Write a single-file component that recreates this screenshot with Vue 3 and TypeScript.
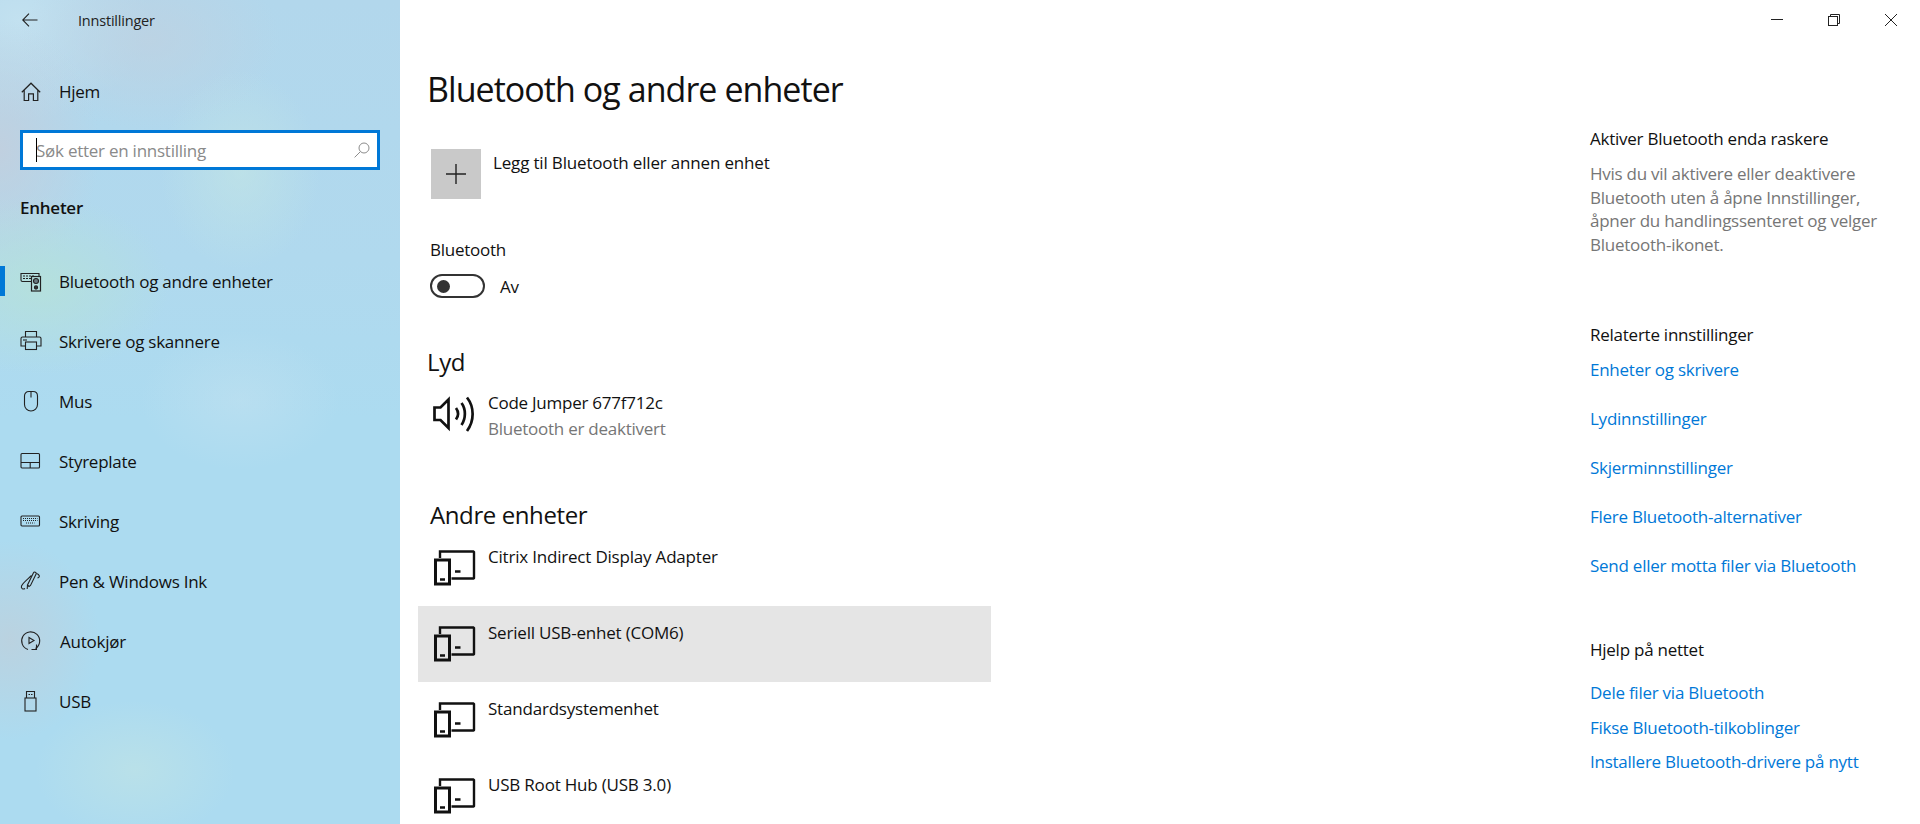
<script setup lang="ts">
const navItems: { label: string; icon: string; active?: boolean }[] = [
  { label: 'Bluetooth og andre enheter', icon: 'bt', active: true },
  { label: 'Skrivere og skannere', icon: 'printer' },
  { label: 'Mus', icon: 'mouse' },
  { label: 'Styreplate', icon: 'touchpad' },
  { label: 'Skriving', icon: 'keyboard' },
  { label: 'Pen & Windows Ink', icon: 'pen' },
  { label: 'Autokjør', icon: 'autoplay' },
  { label: 'USB', icon: 'usb' },
]
const devices = [
  { name: 'Citrix Indirect Display Adapter' },
  { name: 'Seriell USB-enhet (COM6)', selected: true },
  { name: 'Standardsystemenhet' },
  { name: 'USB Root Hub (USB 3.0)' },
]
const related = ['Enheter og skrivere', 'Lydinnstillinger', 'Skjerminnstillinger', 'Flere Bluetooth-alternativer', 'Send eller motta filer via Bluetooth']
const help = ['Dele filer via Bluetooth', 'Fikse Bluetooth-tilkoblinger', 'Installere Bluetooth-drivere på nytt']
</script>

<template>
  <div class="window">
    <aside class="sidebar">
      <div class="titlebar">
        <svg class="back" width="16" height="14" viewBox="0 0 16 14" fill="none" stroke="#222" stroke-width="1.1">
          <path d="M0.5 7H15.5M7 0.7L0.7 7L7 13.3" />
        </svg>
        <span class="app-title">Innstillinger</span>
      </div>
      <div class="home">
        <svg width="20" height="20" viewBox="0 0 20 20" fill="none" stroke="#222" stroke-width="1.2">
          <path d="M0.8 10.2L10 1.2L19.2 10.2M3.2 8V18.5H7.6V11.8H12.4V18.5H16.8V8" />
        </svg>
        <span class="home-label">Hjem</span>
      </div>
      <div class="search">
        <span class="caret"></span>
        <span class="placeholder">Søk etter en innstilling</span>
        <svg width="16" height="16" viewBox="0 0 16 16" fill="none" stroke="#8c8c8c" stroke-width="1">
          <circle cx="10" cy="6" r="5" />
          <path d="M6.4 9.6L0.6 15.4" />
        </svg>
      </div>
      <div class="group">Enheter</div>
      <nav class="nav">
        <div v-for="item in navItems" :key="item.label" class="nav-item" :class="{ active: item.active }">
          <svg class="nav-icon" width="22" height="22" viewBox="0 0 22 22" fill="none" stroke="#222" stroke-width="1.1">
            <template v-if="item.icon === 'bt'">
              <path d="M11.5 11.5H2.5A1.5 1.5 0 0 1 1 10V3.5H19V6" />
              <path d="M3 6h2M6 6h2M9 6h2M12 6h2M3 8.500h2M6 8.500h2M9 8.500h2" />
              <rect x="11.500" y="6.500" width="9" height="14.500" stroke-width="1.200" />
              <circle cx="16" cy="11" r="2.500" fill="#6a7a80" />
              <circle cx="16" cy="17.500" r="1.600" fill="#333" />
            </template>
            <template v-else-if="item.icon === 'printer'">
              <path d="M5.500 7V1.500H16.500V7M5.500 16H1V8.500A1.500 1.500 0 0 1 2.500 7H19.500A1.500 1.500 0 0 1 21 8.500V16H16.500" />
              <rect x="5.500" y="12" width="11" height="7.500" />
              <path d="M3 10H7" />
            </template>
            <template v-else-if="item.icon === 'mouse'">
              <path d="M9 1.500H13C16 1.500 17.500 3.500 17.500 6V14.500A6.500 6.500 0 0 1 4.500 14.500V6C4.500 3.500 6 1.500 9 1.500Z" />
              <path d="M11 1.500V7.500" />
            </template>
            <template v-else-if="item.icon === 'touchpad'">
              <rect x="1" y="3.500" width="18.500" height="14.500" rx="1" />
              <path d="M1 12.500H19.500M10.200 12.500V18" />
            </template>
            <template v-else-if="item.icon === 'keyboard'">
              <rect x="1" y="6" width="18.500" height="10" rx="1" />
              <path d="M3 8.500H17.500M3 10.500H17.500M6 13H14.500" stroke-dasharray="1 1" stroke-width="1.200" />
            </template>
            <template v-else-if="item.icon === 'pen'">
              <path d="M9 16.500L7.500 15L13.500 2.800C14.200 1.300 16.800 2.400 16.100 3.900L10.500 15.500Z" />
              <path d="M7.500 15L7.200 19M11.500 5.500C8 9 3.500 12 1.500 16C0.800 18 2.800 20 5 18.500M16.500 3.500C19.500 4.500 20.500 7 17.500 8" />
            </template>
            <template v-else-if="item.icon === 'autoplay'">
              <path d="M8 19.500A9 9 0 1 1 15.500 18.500" />
              <path d="M9 7.500V13.500L14 10.500Z" />
              <path d="M16.500 14.500V19.500H11.500" />
            </template>
            <template v-else>
              <rect x="5" y="8" width="11" height="13" />
              <path d="M6.500 8V1.500H14.500V8" />
              <path d="M8.500 4.500H10M11 4.500H12.500" />
            </template>
          </svg>
          <span class="nav-label" :class="{ shifted: item.icon === 'autoplay' }">{{ item.label }}</span>
        </div>
      </nav>
    </aside>

    <main class="content">
      <div class="win-controls">
        <svg class="win-icon" width="14" height="14" viewBox="0 0 14 14" fill="none" stroke="#222" stroke-width="1"><path d="M1 6.500H13" /></svg>
        <svg class="win-icon" width="14" height="14" viewBox="0 0 14 14" fill="none" stroke="#222" stroke-width="1"><rect x="1.500" y="3.500" width="9" height="9" /><path d="M3.500 3.500V1.500H12.500V10.500H10.500" /></svg>
        <svg class="win-icon" width="14" height="14" viewBox="0 0 14 14" fill="none" stroke="#222" stroke-width="1"><path d="M1 1L13 13M13 1L1 13" /></svg>
      </div>
      <div class="columns">
        <section class="primary">
          <h1>Bluetooth og andre enheter</h1>
          <div class="add">
            <span class="add-box">
              <svg width="20" height="20" viewBox="0 0 20 20" fill="none" stroke="#222" stroke-width="1.400"><path d="M10 0V20M0 10H20" /></svg>
            </span>
            <span class="add-text">Legg til Bluetooth eller annen enhet</span>
          </div>
          <div class="bt-label">Bluetooth</div>
          <div class="toggle-row">
            <span class="toggle"><span class="knob"></span></span>
            <span class="toggle-text">Av</span>
          </div>
          <h2 class="lyd">Lyd</h2>
          <div class="audio">
            <svg width="42" height="38" viewBox="0 0 42 38" fill="none" stroke="#111" stroke-width="2.700">
              <path d="M1.500 12.500H7.500L15.500 4.500V33L7.500 25H1.500Z" />
              <path d="M23 13C25.500 16.500 25.500 21 23 24.500" />
              <path d="M28.500 8C33 14 33 23.500 28.500 30" />
              <path d="M34 2.500C41.500 12 41.500 26 34 36" />
            </svg>
            <div class="audio-text">
              <div>Code Jumper 677f712c</div>
              <div class="muted">Bluetooth er deaktivert</div>
            </div>
          </div>
          <h2 class="andre">Andre enheter</h2>
          <div v-for="d in devices" :key="d.name" class="device" :class="{ selected: d.selected }">
            <svg class="device-icon" width="42" height="36" viewBox="0 0 42 36" fill="none" stroke="#111" stroke-width="2.400">
              <path d="M6 8V1.500H39.500A1 1 0 0 1 40 2V28A1 1 0 0 1 39.500 28.500H17.500" />
              <rect x="1.500" y="10" width="14" height="24" stroke-width="3" />
              <path d="M6 29.500H11M21 21.500H26.500" />
            </svg>
            <span class="device-name">{{ d.name }}</span>
          </div>
        </section>

        <aside class="secondary">
          <h3 class="quick">Aktiver Bluetooth enda raskere</h3>
          <p class="desc">Hvis du vil aktivere eller deaktivere Bluetooth uten å åpne Innstillinger, åpner du handlingssenteret og velger Bluetooth-ikonet.</p>
          <h3 class="rel">Relaterte innstillinger</h3>
          <a v-for="l in related" :key="l" class="link rel-link">{{ l }}</a>
          <h3 class="hlp">Hjelp på nettet</h3>
          <a v-for="l in help" :key="l" class="link hlp-link">{{ l }}</a>
        </aside>
      </div>
    </main>
  </div>
</template>

<style>
html, body { margin: 0; background: #fff; overflow: hidden; }
</style>

<style scoped>
.window {
  width: 1920px;
  height: 824px;
  display: flex;
  overflow: hidden;
  font-family: "Open Sans", "Noto Sans", sans-serif;
  font-size: 17px;
  letter-spacing: -0.25px;
  color: #111;
  background: #fff;
}
.sidebar {
  width: 400px;
  flex: none;
  box-sizing: border-box;
  background:
    radial-gradient(ellipse 80px 100px at 240px 170px, rgba(196, 230, 228, .6), transparent),
    radial-gradient(ellipse 100px 70px at 240px 400px, rgba(196, 226, 240, .5), transparent),
    radial-gradient(ellipse 100px 70px at 135px 770px, rgba(194, 228, 228, .6), transparent),
    radial-gradient(ellipse 130px 90px at 40px 285px, rgba(182, 226, 216, .8), transparent),
    radial-gradient(ellipse 100px 130px at 0px 150px, rgba(196, 206, 220, .8), transparent),
    radial-gradient(ellipse 90px 100px at 10px 640px, rgba(190, 208, 220, .8), transparent),
    radial-gradient(ellipse 130px 90px at 150px 40px, rgba(190, 210, 226, .8), transparent),
    radial-gradient(ellipse 130px 100px at 20px 20px, rgba(196, 226, 240, .9), transparent),
    linear-gradient(#b2d7ec 0, #b0d9ee 260px, #acdbf0 420px, #acdbf0);
}
.titlebar { height: 40px; display: flex; align-items: center; padding-left: 22px; }
.back { flex: none; }
.app-title { margin-left: 40px; font-size: 14.500px; color: #222; letter-spacing: -0.2px; }
.home { height: 60px; margin-top: 22px; display: flex; align-items: center; padding-left: 21px; }
.home-label { margin-left: 18px; padding-bottom: 2px; }
.search {
  margin: 8px 20px 0;
  height: 40px;
  box-sizing: border-box;
  border: 3px solid #0078d7;
  background: #fff;
  display: flex;
  align-items: center;
  padding: 0 7px 0 13px;
  position: relative;
}
.caret { position: absolute; left: 13px; top: 5px; width: 1px; height: 24px; background: #000; }
.placeholder { flex: 1; color: #8a8a8a; }
.group { height: 40px; margin-top: 17px; padding-left: 20px; display: flex; align-items: center; font-weight: 600; }
.nav { margin-top: 24px; }
.nav-item { height: 60px; display: flex; align-items: center; padding-left: 20px; position: relative; }
.nav-item.active::before { content: ""; position: absolute; left: 0; top: 15px; width: 5px; height: 30px; background: #0078d7; }
.nav-icon { flex: none; }
.nav-label { margin-left: 17px; }
.nav-label.shifted { margin-left: 18px; }
.content { flex: 1; min-width: 0; position: relative; }
.win-controls { position: absolute; right: 22px; top: 13px; display: flex; gap: 43px; }
.columns { display: flex; }
.primary { width: 573px; flex: none; margin-left: 18px; }
h1 { margin: 0; padding: 61px 0 0 9px; height: 56px; font-size: 34px; line-height: 56px; font-weight: 400; letter-spacing: -0.95px; }
.add { display: flex; margin: 32px 0 0 13px; height: 50px; }
.add-box { width: 50px; height: 50px; background: #c9c9c9; display: flex; align-items: center; justify-content: center; }
.add-text { margin-left: 12px; line-height: 28px; letter-spacing: -0.17px; }
.bt-label { margin: 38px 0 0 12px; line-height: 26px; height: 26px; }
.toggle-row { display: flex; align-items: center; margin: 11px 0 0 12px; height: 24px; }
.toggle { width: 55px; height: 24px; box-sizing: border-box; border: 2.500px solid #333; border-radius: 12px; display: flex; align-items: center; padding-left: 5px; }
.knob { width: 13px; height: 13px; border-radius: 50%; background: #333; }
.toggle-text { margin-left: 15px; }
h2 { margin: 0; font-weight: 400; font-size: 24px; line-height: 36px; height: 36px; letter-spacing: -0.4px; }
.lyd { margin: 46px 0 0 9px; }
.audio { display: flex; margin: 6px 0 0 15px; height: 70px; }
.audio svg { margin-top: 9px; flex: none; }
.audio-text { margin-left: 13px; line-height: 26px; }
.audio-text > div:first-child { padding-top: 4px; }
.muted { color: #767676; }
h2.andre { margin: 41px 0 0 12px; height: 33px; }
.device { height: 76px; display: flex; align-items: flex-start; padding-left: 16px; box-sizing: border-box; }
.device.selected { background: #e5e5e5; }
.device-icon { margin-top: 20px; flex: none; }
.device-name { margin-left: 12px; margin-top: 14px; line-height: 26px; letter-spacing: -0.2px; }
.secondary { margin-left: 599px; width: 330px; flex: none; display: flex; flex-direction: column; align-items: flex-start; }
h3 { margin: 0; font-weight: 400; font-size: 17px; line-height: 26px; height: 26px; }
.quick { margin-top: 126px; }
.desc { margin: 10px 0 0; width: 310px; line-height: 23.500px; color: #767676; }
.rel { margin-top: 66px; }
.link { color: #0078d7; line-height: 26px; height: 26px; display: block; }
.rel-link { margin-bottom: 23px; }
.rel + .rel-link { margin-top: 9px; }
.hlp { margin-top: 35px; }
.hlp-link { margin-bottom: 8.500px; }
.hlp + .hlp-link { margin-top: 17px; }
</style>
